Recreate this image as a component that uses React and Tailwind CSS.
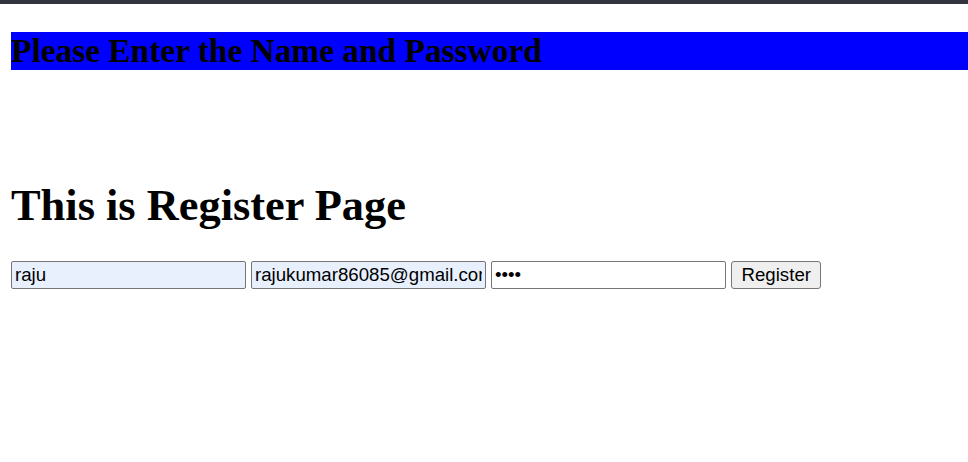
import React from "react";

export default function App() {
  const inputCls =
    "w-[235px] h-[28px] border border-[#767676] rounded-[2px] px-[3px] text-[18.67px] leading-[22px] text-black outline-none font-['Liberation_Sans',Arial,sans-serif]";
  return (
    <div className="min-h-[462px] bg-white font-['Liberation_Serif','Times_New_Roman',serif] text-black">
      <div className="h-[4px] bg-[#32353e]" />
      <div className="pl-[11px]">
        <h2 className="mt-[28px] h-[38px] bg-[#0000ff] text-[33.4px] leading-[38px] font-bold">
          Please Enter the Name and Password
        </h2>
        <div className="h-[110px]" />
        <h1 className="h-[51px] text-[44.4px] leading-[51px] font-bold">
          This is Register Page
        </h1>
        <div className="mt-[30px] flex gap-[5px]">
          <input
            className={inputCls + " bg-[#e8f0fe]"}
            defaultValue="raju"
            readOnly
          />
          <input
            className={inputCls + " bg-[#e8f0fe]"}
            defaultValue="rajukumar86085@gmail.com"
            readOnly
          />
          <input
            type="password"
            className={inputCls + " bg-white"}
            defaultValue="raju"
            readOnly
          />
          <button className="h-[28px] px-[9.5px] border border-[#767676] rounded-[3px] bg-[#efefef] text-[18.67px] leading-[22px] text-black font-['Liberation_Sans',Arial,sans-serif]">
            Register
          </button>
        </div>
      </div>
    </div>
  );
}
